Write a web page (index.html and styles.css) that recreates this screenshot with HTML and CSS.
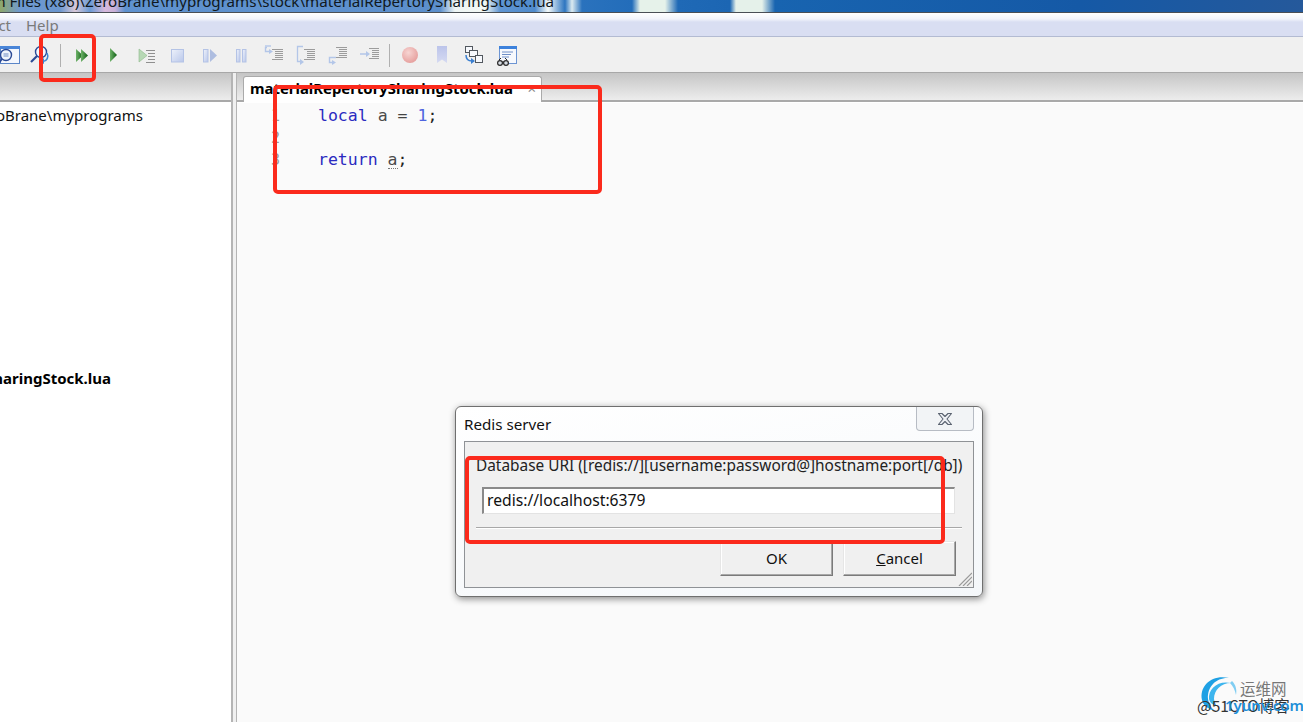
FILE: index.html
```html
<!DOCTYPE html>
<html lang="en">
<head>
<meta charset="utf-8">
<title>ZeroBrane Studio</title>
<link rel="stylesheet" href="styles.css">
</head>
<body>
<svg class="defs" width="0" height="0" aria-hidden="true">
  <defs>
    <linearGradient id="gGreen" x1="0" x2="1" y1="0" y2="0"><stop offset="0" stop-color="#6fb36a"/><stop offset="1" stop-color="#0f5f14"/></linearGradient>
    <linearGradient id="gPale" x1="0" x2="1" y1="0" y2="1"><stop offset="0" stop-color="#eef2fb"/><stop offset="1" stop-color="#b9c7ea"/></linearGradient>
    <linearGradient id="gBook" x1="0" x2="0" y1="0" y2="1"><stop offset="0" stop-color="#bcc4ea"/><stop offset="1" stop-color="#d5daf2"/></linearGradient>
    <radialGradient id="gRec" cx=".4" cy=".35" r=".7"><stop offset="0" stop-color="#f7d5d3"/><stop offset="1" stop-color="#e59d9b"/></radialGradient>
  </defs>
</svg>
<div class="app">
  <div class="titlebar"><span class="title-text">C:\Program Files (x86)\ZeroBrane\myprograms\stock\materialRepertorySharingStock.lua</span></div>
  <div class="menubar">
    <div class="menu-clip"><span>Project</span></div>
    <span class="menu-item">Help</span>
  </div>
  <div class="toolbar">
    <svg class="icon" viewBox="0 0 24 24"><rect x="4.5" y="3.5" width="19" height="17" fill="#f4f7fd" stroke="#5b86c8"/><rect x="4" y="3" width="20" height="3" fill="#4a86d8"/><circle cx="10" cy="12" r="5.5" fill="#eef4fc" stroke="#2b4a96" stroke-width="1.4"/><path d="M7.5 11h5M7.5 13h5" stroke="#6d8bc4"/><path d="M6 16l-4 5" stroke="#2b4a96" stroke-width="2"/></svg>
    <svg class="icon" viewBox="0 0 24 24"><circle cx="13" cy="9" r="5.5" fill="#f4f7fd" stroke="#2b4a96" stroke-width="1.4"/><path d="M9 13l-6 6" stroke="#2b4a96" stroke-width="2.2"/><path d="M19 10c2 4 0 8-4 8.500" fill="none" stroke="#3f88d2" stroke-width="1.600"/><path d="M16 15l-4 3.500 4 2.500z" fill="#3f88d2"/></svg>
    <span class="tool-sep"></span>
    <svg class="icon" viewBox="0 0 24 24"><path d="M7 6l7 6.500-7 6.500z" fill="url(#gGreen)"/><path d="M12 6l7 6.500-7 6.500z" fill="url(#gGreen)"/></svg>
    <svg class="icon" viewBox="0 0 24 24"><path d="M9 5l7 7-7 7z" fill="url(#gGreen)"/></svg>
    <svg class="icon" viewBox="0 0 24 24"><path d="M6 6l8 6.500-8 6.500z" fill="#b7d8b5" stroke="#8dbb8b" stroke-width=".6"/><path d="M13 7.500h9M15 10.500h7M15 13.500h7M15 16.500h7M13 19.500h9" stroke="#8f8f8f"/></svg>
    <svg class="icon" viewBox="0 0 24 24"><rect x="6.500" y="6.500" width="12" height="12.500" fill="url(#gPale)" stroke="#b4c3e6"/></svg>
    <svg class="icon" viewBox="0 0 24 24"><rect x="6.500" y="6.500" width="4.500" height="12.500" fill="url(#gPale)" stroke="#b4c3e6"/><path d="M13 6l7 6.500-7 6.500z" fill="#aebde0"/></svg>
    <svg class="icon" viewBox="0 0 24 24"><rect x="7.500" y="6.500" width="3.500" height="12.500" fill="url(#gPale)" stroke="#b4c3e6"/><rect x="13.500" y="6.500" width="3.500" height="12.500" fill="url(#gPale)" stroke="#b4c3e6"/></svg>
    <svg class="icon" viewBox="0 0 24 24"><path d="M6 4.500h-1.500v4h5" fill="none" stroke="#b3c6e8" stroke-width="1.400"/><path d="M8 6l4 2.500-4 2.500z" fill="#b3c6e8"/><path d="M4 3h6" stroke="#b3c6e8" stroke-width="1.400"/><path d="M11 6.500h11M14 8.500h8M14 10.500h8M14 12.500h8M14 14.500h8M11 16.500h11" stroke="#9c9c9c"/></svg>
    <svg class="icon" viewBox="0 0 24 24"><path d="M10 3.500h-5.500v15h4" fill="none" stroke="#b3c6e8" stroke-width="1.300"/><path d="M7 16l4 3-4 3z" fill="#b3c6e8"/><path d="M11 6.500h11M14 8.500h8M14 10.500h8M14 12.500h8M14 14.500h8M11 16.500h11" stroke="#9c9c9c"/></svg>
    <svg class="icon" viewBox="0 0 24 24"><path d="M11 14.500h-6.500v5h3" fill="none" stroke="#b3c6e8" stroke-width="1.400"/><path d="M7 17l4 2.500-4 2.500z" fill="#b3c6e8"/><path d="M11 4.500h11M14 6.500h8M14 8.500h8M14 10.500h8M14 12.500h8M11 14.500h11" stroke="#9c9c9c"/></svg>
    <svg class="icon" viewBox="0 0 24 24"><path d="M3 11h7" stroke="#b3c6e8" stroke-width="1.500"/><path d="M9 8l4 3-4 3z" fill="#b3c6e8"/><path d="M12 5.500h10M15 7.500h7M15 9.500h7M15 11.500h7M15 13.500h7M12 15.500h10" stroke="#9c9c9c"/></svg>
    <span class="tool-sep"></span>
    <svg class="icon" viewBox="0 0 24 24"><circle cx="12" cy="12" r="8" fill="url(#gRec)"/></svg>
    <svg class="icon" viewBox="0 0 24 24"><path d="M7 3h10v17l-5-3.500-5 3.500z" fill="url(#gBook)"/></svg>
    <svg class="icon" viewBox="0 0 24 24"><rect x="3.500" y="3.500" width="7" height="6" fill="#f7f9fd" stroke="#52585f"/><rect x="7.500" y="7.500" width="8" height="6" fill="#f7f9fd" stroke="#52585f"/><rect x="13.500" y="12.500" width="7" height="7" fill="#f7f9fd" stroke="#52585f"/><path d="M4 12c0 4 2 6 6 6" fill="none" stroke="#3b7fd0" stroke-width="1.500"/><path d="M9 15l4 3-4 3z" fill="#3b7fd0"/></svg>
    <svg class="icon" viewBox="0 0 24 24"><rect x="5.500" y="3.500" width="17" height="17" fill="#f7f9fd" stroke="#6d95d3"/><rect x="5" y="3" width="18" height="3" fill="#3d82dc"/><path d="M8 9h11M8 11.500h9M8 14h7" stroke="#7090c8"/><circle cx="6" cy="20" r="2.400" fill="#d6dbe2" stroke="#2a2a2a" stroke-width="1.200"/><circle cx="12" cy="20" r="2.400" fill="#d6dbe2" stroke="#2a2a2a" stroke-width="1.200"/><path d="M8 19h2M5 17l2-2M13 17l-2-2" stroke="#2a2a2a"/></svg>
  </div>
  <div class="workspace">
    <aside class="project">
      <div class="pane-head"></div>
      <div class="tree">
        <div class="tree-row tree-root"><span>C:\Program Files (x86)\ZeroBrane\myprograms</span></div>
        <div class="tree-row tree-file"><span>materialRepertorySharingStock.lua</span></div>
      </div>
    </aside>
    <div class="sash"></div>
    <main class="editor">
      <div class="tabs">
        <div class="tab"><span class="tab-name">materialRepertorySharingStock.lua</span><span class="tab-close">×</span></div>
      </div>
      <div class="code">
        <div class="code-line"><span class="ln">1</span><span class="kw">local</span> <span class="id">a</span> <span class="op">=</span> <span class="num">1</span><span class="punct">;</span></div>
        <div class="code-line"><span class="ln">2</span></div>
        <div class="code-line"><span class="ln">3</span><span class="kw">return</span> <span class="id dotted">a</span><span class="punct">;</span></div>
      </div>
    </main>
  </div>
</div>

<section class="dialog">
  <header class="dlg-title">
    <span class="dlg-name">Redis server</span>
    <span class="dlg-close"><svg width="18" height="14" viewBox="0 0 18 14"><path d="M2.500 1.500h3.500l3 3 3-3h3.500l-4.500 5.500 4.500 5.500h-3.500l-3-3-3 3h-3.500l4.500-5.500z" fill="#eef0f4" stroke="#5a6270" stroke-width="1.100" stroke-linejoin="round"/></svg></span>
  </header>
  <div class="dlg-panel">
    <div class="dlg-label">Database URI ([redis://][username:password@]hostname:port[/db])</div>
    <div class="dlg-input">redis://localhost:6379</div>
    <div class="dlg-rule"></div>
    <div class="dlg-buttons">
      <span class="btn">OK</span>
      <span class="btn"><span class="mnemonic">C</span>ancel</span>
    </div>
    <svg class="grip" width="14" height="14" viewBox="0 0 14 14"><path d="M14 1L1 14M14 5L5 14M14 9L9 14" stroke="#9a9a9a" stroke-width="1.200"/></svg>
  </div>
</section>

<div class="mark mark-run"></div>
<div class="mark mark-code"></div>
<div class="mark mark-uri"></div>

<div class="watermark">
  <svg class="wm-logo" width="40" height="42" viewBox="0 0 40 42"><path d="M3 26C0 12 13 0 30 4C18 3 8 12 9 25c.5 5 3 9 7 12C9 35 4 31 3 26z" fill="#1ea0e4"/><path d="M10 25C9 15 19 6 32 9C22 9 15 16 15 25c.3 3 1.500 5 3 7-4-1-7-3-8-7z" fill="#3db5ee"/><path d="M33 7c4 4 5 9 4 14-1-5-3-9-6-12z" fill="#7fcdf2"/></svg>
  <span class="wm-cn">运维网</span>
  <span class="wm-ctu">@51CTO博客</span>
  <span class="wm-site">1yunv.com</span>
</div>
</body>
</html>
```

FILE: styles.css
```css
* { box-sizing: border-box; }
html, body { margin: 0; padding: 0; height: 722px; overflow: hidden; background: #f0f0f0; }
body { font-family: "Noto Sans", "Open Sans", sans-serif; font-size: 15px; color: #111; position: relative; }
.defs { position: absolute; }

.app { display: flex; flex-direction: column; height: 722px; width: 1303px; }

.titlebar {
  height: 13px; flex: none; overflow: hidden; display: flex; justify-content: flex-end;
  width: 1303px; padding-right: 749px;
  border-bottom: 1px solid #4a4f55;
  background: linear-gradient(90deg, #8fa86a 0, #6f9ad0 20px, #6a96cf 60px, #d8c8d8 75px, #6a9ad4 90px, #d7b9dc 105px, #c8b0d8 115px, #5f92cf 125px, #5c8fcc 440px, #eef5f5 455px, #f3f8f4 485px, #5f95d2 500px, #4f8bcc 535px, #f5fafa 548px, #2d75c0 565px, #dbeaf0 572px, #2a72bd 582px, #236dba 632px, #e6f2ea 640px, #e6f2ea 665px, #1f69b6 678px, #1c66b3 730px, #e5f1ea 736px, #e5f1ea 762px, #1864b0 775px, #1559a6 1080px, #25599b 1303px);
}
.title-text { white-space: nowrap; flex: none; line-height: 20px; margin-top: -9px; color: #101820; font-size: 15.15px; }

.menubar {
  height: 24px; flex: none; display: flex; align-items: flex-start; gap: 15px; padding-top: 2px;
  border-bottom: 1px solid #b3bbd2; color: #7a7a7a; font-size: 15px; line-height: 20px;
  background: linear-gradient(180deg, #fff 0, #f2f4fb 6px, #d9def2 9px, #d9def2 100%);
}
.menu-clip { width: 11px; display: flex; justify-content: flex-end; white-space: nowrap; overflow: hidden; }
.menu-clip span { flex: none; }

.toolbar {
  height: 36px; flex: none; display: flex; align-items: center; gap: 8px; padding-top: 1px; margin-left: -4px;
  border-bottom: 1px solid #a8a8a8; background: #f0f0f0;
}
.icon { width: 24px; height: 24px; flex: none; display: block; }
.tool-sep { width: 1px; height: 23px; background: #b0b0b0; flex: none; }

.workspace { flex: 1; display: flex; min-height: 0; }
.project { width: 233px; flex: none; display: flex; flex-direction: column; border-right: 2px solid #b4b4b4; }
.pane-head { height: 29px; flex: none; background: linear-gradient(180deg, #c5c5c5, #ededed); border-bottom: 2px solid #a9a9a9; }
.tree { flex: 1; background: #fff; padding-top: 1px; overflow: hidden; }
.tree-row { display: flex; justify-content: flex-end; white-space: nowrap; line-height: 24px; height: 24px; }
.tree-row span { flex: none; }
.tree-root { width: 143px; margin-top: 0; }
.tree-file { width: 111px; margin-top: 239px; font-weight: 700; color: #000; }

.sash { width: 4px; flex: none; background: #f0f0f0; border-right: 1px solid #b4b4b4; }

.editor { flex: 1; display: flex; flex-direction: column; min-width: 0; background: #fafafa; }
.tabs { height: 29px; flex: none; background: linear-gradient(180deg, #c5c5c5, #ededed); border-bottom: 2px solid #a9a9a9; padding: 3px 0 0 6px; display: flex; box-shadow: 0 1px 0 #fff; }
.tab { width: 299px; height: 26px; display: flex; align-items: center; justify-content: space-between; padding: 0 5px 3px 6px; background: #fff; border: 1px solid #aaa; border-bottom: 0; border-radius: 3px 3px 0 0; }
.tab-name { font-weight: 700; color: #000; white-space: nowrap; font-size: 14.9px; }
.tab-close { color: #888; font-size: 15px; line-height: 14px; }

.code { padding-top: 3px; font-family: "DejaVu Sans Mono", monospace; font-size: 16.5px; flex: 1; }
.code-line { height: 22px; line-height: 22px; display: flex; white-space: pre; }
.ln { width: 81px; flex: none; padding-right: 38px; text-align: right; color: #9a9a9a; font-size: 15px; }
.kw { color: #2a2ac0; }
.id { color: #4a4a4a; margin: 0 10px; }
.op { color: #444; margin-right: 10px; }
.num { color: #4f64e0; }
.punct { color: #222; }
.dotted { margin-right: 0; border-bottom: 1px dotted #777; height: 20px; line-height: 22px; }

.dialog {
  position: absolute; left: 455px; top: 406px; width: 528px; height: 191px;
  display: flex; flex-direction: column; padding: 0 8px 8px;
  background: linear-gradient(170deg, #fff 0, #f4f7fa 100%);
  border: 1px solid #6f6f6f; border-radius: 6px;
  box-shadow: 1px 2px 7px rgba(0,0,0,.45);
}
.dlg-title { height: 34px; flex: none; display: flex; justify-content: space-between; align-items: flex-start; }
.dlg-name { line-height: 20px; margin-top: 7px; color: #111; font-size: 15.2px; }
.dlg-close { width: 58px; height: 24px; display: flex; align-items: center; justify-content: center; border: 1px solid #b7bcc4; border-top: 0; border-radius: 0 0 4px 4px; background: #f2f4f6; }
.dlg-panel { flex: 1; position: relative; background: #f0f0f0; border: 1px solid #8f9296; padding: 14px 12px 0 11px; display: flex; flex-direction: column; }
.dlg-label { line-height: 20px; white-space: nowrap; color: #222; font-size: 15.4px; }
.dlg-input { margin: 11px 6px 0 6px; height: 27px; flex: none; line-height: 22px; padding-left: 3px; background: #fff; border: 2px solid #8a8a8a; border-right: 1px solid #e3e3e3; border-bottom: 1px solid #e3e3e3; color: #111; font-size: 15.7px; }
.dlg-rule { height: 2px; flex: none; margin: 13px 0 0; width: 486px; border-top: 1px solid #a8a8a8; border-bottom: 1px solid #fff; }
.dlg-buttons { display: flex; justify-content: flex-end; gap: 10px; margin: 12px 5px 0 0; }
.btn { width: 113px; height: 35px; display: flex; align-items: center; justify-content: center; padding-bottom: 1px; background: #f0f0f0; border: 1px solid; border-color: #e6e6e6 #7a7a7a #7a7a7a #e6e6e6; box-shadow: inset -1px -1px 0 #a8a8a8, inset 1px 1px 0 #fff; color: #111; }
.mnemonic { text-decoration: underline; }
.grip { position: absolute; right: 1px; bottom: 1px; }

.mark { position: absolute; border: 4px solid #fb2a1c; border-radius: 5px; pointer-events: none; }
.mark-run { left: 39px; top: 34px; width: 57px; height: 48px; }
.mark-code { left: 273px; top: 85px; width: 329px; height: 109px; }
.mark-uri { left: 465px; top: 456px; width: 480px; height: 88px; }

.watermark { position: absolute; left: 1190px; top: 670px; width: 113px; height: 52px; }
.wm-logo { position: absolute; left: 9px; top: 4px; }
.wm-cn { position: absolute; left: 50px; top: 9px; font: 15.5px/18px "Noto Sans CJK SC", sans-serif; color: #777; }
.wm-ctu { position: absolute; left: 7px; top: 26px; font: 15.5px/18px "Noto Sans CJK SC", sans-serif; color: #333; white-space: nowrap; }
.wm-site { position: absolute; left: 35px; top: 26px; font: 600 15px/18px "Noto Sans", sans-serif; color: #1f8fd8; white-space: nowrap; }
```
